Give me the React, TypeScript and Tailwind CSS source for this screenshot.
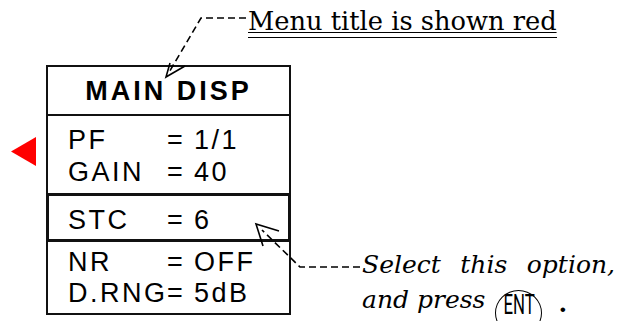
const sans = "font-['Liberation_Sans',Arial,sans-serif]";
const serif = "font-['DejaVu_Serif','Liberation_Serif',serif]";

function Row({ label, value }: { label: string; value: string }) {
  return (
    <div className="flex h-[32px] items-center leading-[32px]">
      <span className="w-[99px] tracking-[2.5px]">{label}</span>
      <span className="w-[27px]">=</span>
      <span className="tracking-[2.5px]">{value}</span>
    </div>
  );
}

function Leaders() {
  return (
    <svg className="pointer-events-none absolute inset-0" width="622" height="321" viewBox="0 0 622 321">
      <g fill="none" stroke="#000" strokeWidth="1.6">
        <polyline points="246,18 201,18 168,74" strokeDasharray="7 4" />
        <polyline points="185,66 166,77 170,63" />
        <polyline points="360,267 300,267 262,230" strokeDasharray="7 4" />
        <polyline points="279,231 256,224 263,246" />
      </g>
    </svg>
  );
}

export default function App() {
  return (
    <div className="relative h-[321px] w-[622px] overflow-hidden bg-white text-black">
      <div className="flex pt-[65px]">
        <div className="flex w-[46px] justify-start pl-[11px] pt-[72px]">
          <svg width="26" height="30" viewBox="0 0 26 30">
            <polygon points="0,14.5 25,0 25,29" fill="#ff0000" />
          </svg>
        </div>

        <div className={`flex h-[250px] w-[245px] flex-col border-2 border-[#111] text-[27px] ${sans}`}>
          <div className="h-[49px] border-b-2 border-[#111] pt-[8px] text-center font-bold leading-[32px] tracking-[3px]">
            MAIN DISP
          </div>
          <div className="h-[77px] pl-[20px] pt-[8px]">
            <Row label="PF" value="1/1" />
            <Row label="GAIN" value="40" />
          </div>
          <div className="-mx-[2px] h-[49px] border-[3px] border-[#111] pl-[19px] pt-[8px]">
            <Row label="STC" value="6" />
          </div>
          <div className="pl-[20px] pt-[4px]">
            <Row label="NR" value="OFF" />
            <div className="-mt-px">
              <Row label="D.RNG" value="5dB" />
            </div>
          </div>
        </div>
      </div>

      <div className={`absolute left-[248px] top-[9px] text-[25.7px] leading-[25px] ${serif}`}>
        <div className="underline decoration-1 underline-offset-[2px]">Menu title is shown red</div>
        <div className="mt-[3px] h-px bg-black" />
      </div>

      <div className={`absolute left-[362px] top-[247px] text-[25px] italic leading-[35px] ${serif}`}>
        <div className="flex w-[253px] justify-between">
          <span>Select</span>
          <span>this</span>
          <span>option,</span>
        </div>
        <div className="flex items-start">
          <span>and press</span>
          <span className="ml-[10px] mt-[8px] flex h-[46px] w-[47px] justify-center rounded-[50%] border-[1.5px] border-black">
            <span className="inline-block scale-x-[0.6] font-['Roboto',sans-serif] text-[28px] not-italic leading-[28px]">
              ENT
            </span>
          </span>
          <span className="ml-[16px] mt-[4px] font-bold not-italic">.</span>
        </div>
      </div>

      <Leaders />
    </div>
  );
}
